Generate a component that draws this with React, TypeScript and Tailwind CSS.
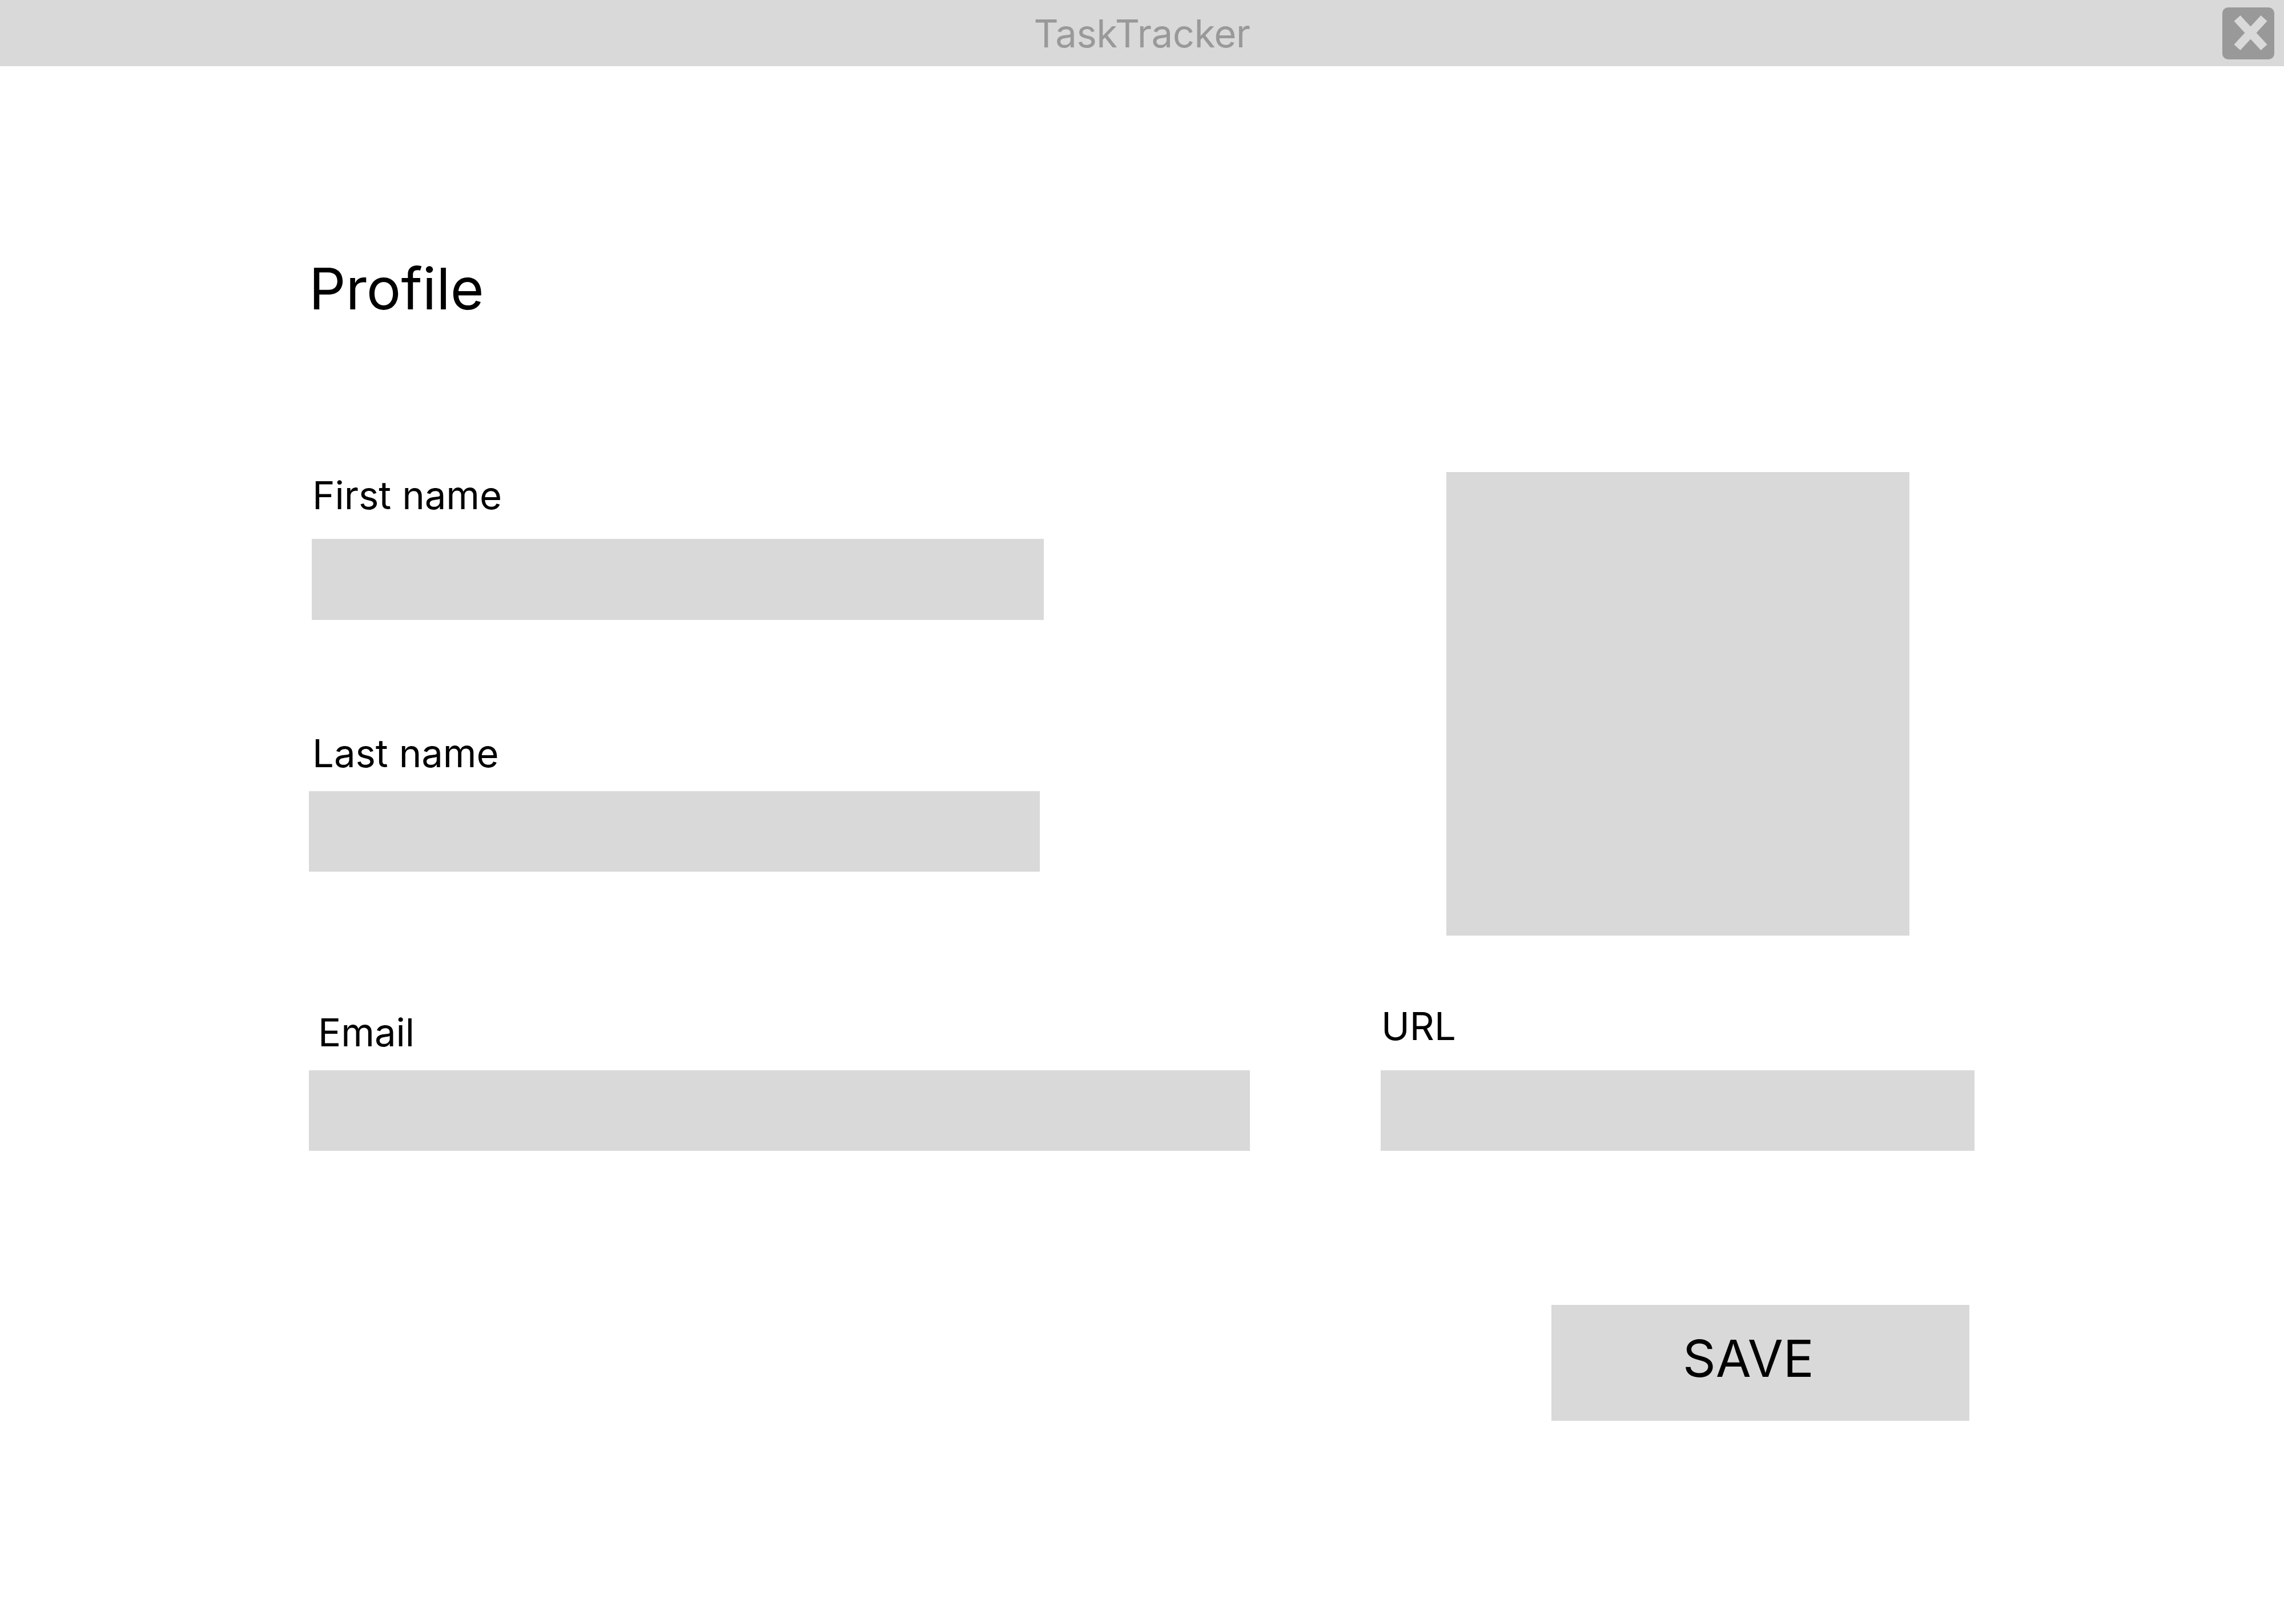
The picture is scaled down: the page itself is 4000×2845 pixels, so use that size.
const fieldBox = "bg-[#d9d9d9]";
const labelText = "text-[67px] leading-none text-black";

function CloseButton() {
  return (
    <button className="mr-[17px] flex h-[91px] w-[91px] items-center justify-center rounded-[10px] bg-[#999999]">
      <svg width="91" height="91" viewBox="0 0 91 91">
        <path d="M26 19 L73 70 M73 19 L26 70" stroke="#d9d9d9" strokeWidth="15" fill="none" />
      </svg>
    </button>
  );
}

export default function App() {
  return (
    <div className="h-[2845px] w-[4000px] bg-white font-['Inter',sans-serif]">
      <header className="flex h-[116px] items-center bg-[#d9d9d9]">
        <div className="flex flex-1 justify-center pl-[108px]">
          <span className="text-[67px] leading-none tracking-[-0.5px] text-[#999999]">TaskTracker</span>
        </div>
        <CloseButton />
      </header>

      <main className="pl-[541px]">
        <h1 className="mt-[339px] text-[101px] leading-none font-normal text-black">Profile</h1>

        <div className="mt-[271px] grid grid-cols-[1877px_1040px] items-start">
          <div className="flex flex-col pt-[7px]">
            <label className={`ml-[6px] ${labelText}`}>First name</label>
            <div className={`ml-[5px] mt-[43px] h-[142px] w-[1282px] ${fieldBox}`} />
            <label className={`ml-[6px] mt-[200px] ${labelText}`}>Last name</label>
            <div className={`mt-[33px] h-[141px] w-[1280px] ${fieldBox}`} />
          </div>
          <div className={`ml-[115px] h-[812px] w-[811px] ${fieldBox}`} />
        </div>

        <div className="grid grid-cols-[1877px_1040px] items-start">
          <div className="flex flex-col">
            <label className={`ml-[16px] mt-[136px] ${labelText}`}>Email</label>
            <div className={`mt-[33px] h-[141px] w-[1648px] ${fieldBox}`} />
          </div>
          <div className="flex flex-col">
            <label className={`ml-[1px] mt-[125px] ${labelText}`}>URL</label>
            <div className={`mt-[44px] h-[141px] w-[1040px] ${fieldBox}`} />
          </div>
        </div>

        <button className="ml-[2176px] mt-[270px] flex h-[203px] w-[732px] items-center justify-center bg-[#d9d9d9] pb-[16px] pr-[42px]">
          <span className="text-[90px] leading-none text-black">SAVE</span>
        </button>
      </main>
    </div>
  );
}
